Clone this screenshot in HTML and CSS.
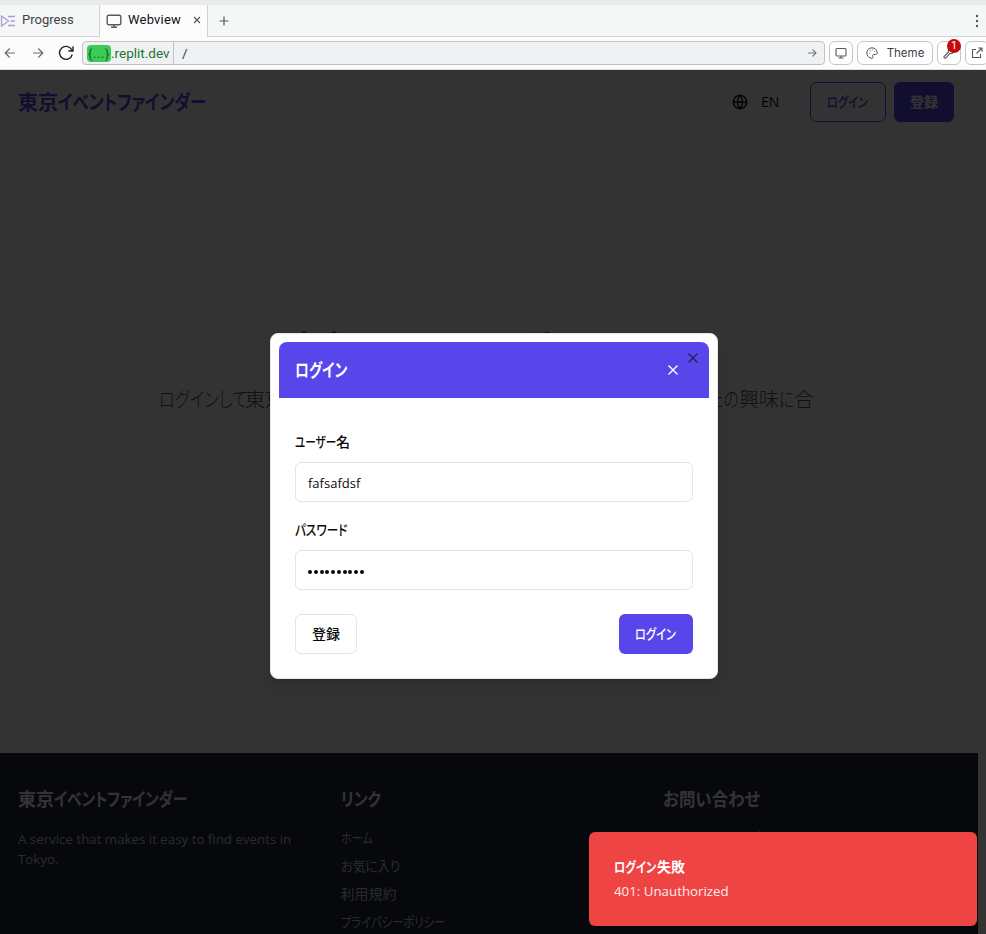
FILE: index.html
```
<!DOCTYPE html>
<html lang="ja">
<head>
<meta charset="utf-8">
<title>東京イベントファインダー</title>
<link rel="stylesheet" href="styles.css">
</head>
<body>
<div class="tabs">
  <div class="tab tab-progress">
    <svg class="ic-progress" width="15" height="12" viewBox="0 0 15 12" fill="none" stroke="#a9a0d6" stroke-width="1.300"><path d="M1.500 1v10l7-5zM8 1.500h7M10.500 6H15M8 10.500h7"/></svg>
    <span class="progress-label">Progress</span>
  </div>
  <div class="tab tab-active">
    <svg width="16" height="16" viewBox="0 0 16 16" fill="none" stroke="#555b63" stroke-width="1.400"><rect x="1.200" y="2.200" width="13.600" height="9.600" rx="1.500"/><path d="M8 12v2.500M5 14.300h6"/></svg>
    <span class="webview-label">Webview</span>
    <svg class="tab-close" width="8" height="8" viewBox="0 0 8 8" stroke="#555" stroke-width="1.100"><path d="M1 1l6 6M7 1L1 7"/></svg>
  </div>
  <svg class="tab-add" width="10" height="10" viewBox="0 0 10 10" stroke="#555" stroke-width="1.200"><path d="M5 .500v9M.500 5h9"/></svg>
  <svg class="tab-menu" width="4" height="14" viewBox="0 0 4 14" fill="#50555c"><circle cx="2" cy="2" r="1.200"/><circle cx="2" cy="7" r="1.200"/><circle cx="2" cy="12" r="1.200"/></svg>
</div>
<div class="toolbar">
  <svg class="nav back" width="12" height="12" viewBox="0 0 12 12" fill="none" stroke="#666c73" stroke-width="1.200"><path d="M11 6H1.200M5.700 1.500L1.200 6l4.500 4.500"/></svg>
  <svg class="nav fwd" width="12" height="12" viewBox="0 0 12 12" fill="none" stroke="#666c73" stroke-width="1.200"><path d="M1 6h9.800M6.300 1.500L10.800 6l-4.500 4.500"/></svg>
  <svg class="nav reload" width="16" height="16" viewBox="0 0 16 16" fill="none" stroke="#22262b" stroke-width="1.400"><path d="M14.300 9.500A6.500 6.500 0 1 1 13.700 4.700L14.800 6M15 1.300V6h-4.700"/></svg>
  <div class="address">
    <div class="host"><span class="dots">{...}</span><span>.replit.dev</span></div>
    <span class="path">/</span>
    <svg class="go" width="10" height="10" viewBox="0 0 10 10" fill="none" stroke="#777c82" stroke-width="1.100"><path d="M1 5h8M5.500 1.500L9 5 5.500 8.500"/></svg>
  </div>
  <div class="tool device"><svg width="12" height="12" viewBox="0 0 12 12" fill="none" stroke="#555b63" stroke-width="1.100"><rect x="1" y="1.500" width="10" height="7.500" rx="1"/><path d="M6 9v1.800M3.500 11h5"/></svg></div>
  <div class="tool theme">
    <svg width="12" height="12" viewBox="0 0 12 12" fill="none" stroke="#555b63" stroke-width="1"><path d="M6 .8C3 .8.8 3.100.8 6S3 11.200 6 11.200c1.200 0 1-.9.700-1.600-.5-1.300.1-2.100 1.300-2.100h1.600c1.100 0 1.600-.7 1.600-1.500C11.200 3 9 .8 6 .8z"/><path d="M3 6.100h.8M3.800 3.700h.8M6.300 2.800h.8M8.400 4.400h.8"/></svg>
    <span>Theme</span>
  </div>
  <div class="tool wrench"><svg width="12" height="12" viewBox="0 0 12 12" fill="none" stroke="#555b63" stroke-width="1.100"><path d="M8.200 1a3 3 0 0 0-2.700 4L1.200 9.300a1 1 0 0 0 1.500 1.500L7 6.500a3 3 0 0 0 4-2.700L9.500 5 7.800 4.200 7 2.500z"/></svg><span class="badge">1</span></div>
  <div class="tool popout"><svg width="12" height="12" viewBox="0 0 12 12" fill="none" stroke="#555b63" stroke-width="1.100"><path d="M5 2.500H1.500v8h8V7M7.300 1H11v3.700M11 1L5.500 6.500"/></svg></div>
</div>
<main class="viewport">
  <div class="page">
    <header class="site-header">
      <span class="brand">東京<span class="k k-brand">イベントファインダー</span></span>
      <svg class="globe" width="16" height="16" viewBox="0 0 24 24" fill="none" stroke="#0a0a0a" stroke-width="2"><circle cx="12" cy="12" r="10"/><path d="M2 12h20M12 2a15 15 0 0 1 0 20 15 15 0 0 1 0-20"/></svg>
      <span class="lang">EN</span>
      <span class="hbtn hbtn-outline"><span class="k k-login">ログイン</span></span>
      <span class="hbtn hbtn-solid">登録</span>
    </header>
    <section class="hero">
      <h1>東京<span class="k k-hero">イベントファインダーへようこそ</span></h1>
      <p><span><span class="k k-lead">ログインして</span>東京のイベントを探索し、</span><span><span class="k k-your">あなたの</span>興味<span class="k k-ni">に</span>合</span></p>
    </section>
    <footer class="site-footer">
      <div class="fcol">
        <h3>東京<span class="k k-fbrand">イベントファインダー</span></h3>
        <p>A service that makes it easy to find events in<br>Tokyo.</p>
      </div>
      <div class="fcol">
        <h3><span class="k k-link">リンク</span></h3>
        <ul><li><span class="k k-home">ホーム</span></li><li><span class="k k-fav">お気に入り</span></li><li>利用規約</li><li><span class="k k-privacy">プライバシーポリシー</span></li></ul>
      </div>
      <div class="fcol">
        <h3><span class="k k-contact">お問い合わせ</span></h3>
        <ul><li class="contact-line"><span class="k k-mail">メールでのお問い合わせ</span></li></ul>
      </div>
    </footer>
  </div>
  <div class="overlay"></div>
  <div class="dialog">
    <div class="dialog-head">
      <h2><span class="k k-title">ログイン</span></h2>
      <svg width="10" height="10" viewBox="0 0 10 10" stroke="#fff" stroke-width="1.400"><path d="M.500.500l9 9M9.500.500l-9 9"/></svg>
    </div>
    <svg class="dialog-x" width="10" height="10" viewBox="0 0 10 10" stroke="#251f5c" stroke-width="1.400"><path d="M.500.500l9 9M9.500.500l-9 9"/></svg>
    <div class="dialog-body">
      <div class="label"><span class="k k-user">ユーザー</span>名</div>
      <div class="field">fafsafdsf</div>
      <div class="label"><span class="k k-pass">パスワード</span></div>
      <div class="field password"><i></i><i></i><i></i><i></i><i></i><i></i><i></i><i></i><i></i><i></i></div>
      <div class="actions"><span class="btn register">登録</span><span class="btn login"><span class="k k-login">ログイン</span></span></div>
    </div>
  </div>
  <div class="toast"><strong><span class="k k-login">ログイン</span>失敗</strong><span class="toast-text">401: Unauthorized</span></div>
</main>
</body>
</html>
```
FILE: styles.css
```
* { box-sizing: border-box; margin: 0; padding: 0; }
body {
  width: 986px; height: 934px; overflow: hidden;
  display: flex; flex-direction: column;
  font-family: "Open Sans", "Noto Sans CJK JP", sans-serif;
  font-size: 14px; color: #0a0a0a; white-space: nowrap;
}
svg { display: block; flex: none; }
.tabs {
  height: 37px; flex: none; display: flex; align-items: center;
  border-top: 5px solid #e9ebed; border-bottom: 1px solid #cfd2d4;
  background: #f5f7f6; font-family: Roboto, sans-serif; font-size: 13px;
}
.tab { display: flex; align-items: center; height: 31px; }
.tab-progress { width: 99px; color: #3c4148; }
.ic-progress { margin-top: 1px; }
.progress-label { margin: -2px 0 0 7px; }
.tab-active {
  width: 109px; height: 32px; margin-bottom: -1px; padding: 0 6px 1px;
  background: #fcfcfc; border: solid #cfd2d4; border-width: 0 1px;
}
.webview-label { margin: -2px 0 0 6px; color: #0f1216; letter-spacing: .2px; }
.tab-close { margin: -1px 0 0 auto; }
.tab-add { margin-left: 11px; }
.tab-menu { margin-left: auto; margin-right: 7px; }
.toolbar {
  height: 33px; flex: none; display: flex; align-items: center;
  background: #fcfcfc; border-bottom: 1px solid #dcdedf;
  font-family: Roboto, sans-serif;
}
.nav.back { margin-left: 4px; }
.nav.fwd { margin-left: 16px; }
.nav.reload { margin-left: 14px; }
.address {
  width: 743px; flex: none; height: 24px; margin-left: 8px; display: flex; align-items: center;
  background: #eff1f3; border: 1px solid #bfc3c7; border-radius: 4px; font-size: 13.5px;
}
.host {
  width: 91px; height: 22px; padding-left: 4px; display: flex; align-items: center;
  border-right: 1px solid #bfc3c7; color: #1c7431;
}
.dots { width: 24px; height: 17px; line-height: 16px; text-align: center; background: #3ccc56; color: #0f6a28; border-radius: 4px; letter-spacing: .5px; }
.path { margin-left: 8px; color: #30353b; }
.go { margin-left: auto; margin-right: 7px; }
.tool {
  height: 24px; width: 24px; margin-left: 4px; flex: none; position: relative;
  display: flex; align-items: center; justify-content: center;
  background: #fff; border: 1px solid #c4c7ca; border-radius: 6px;
}
.theme { width: 76px; gap: 9px; font-family: "Inter", sans-serif; font-size: 11.5px; color: #3c4148; }
.badge {
  position: absolute; left: 9px; top: -3px; width: 14px; height: 14px; border-radius: 7px;
  background: #c40a0a; color: #fff; font-size: 11px; line-height: 14px; text-align: center;
}
.viewport { flex: 1; position: relative; overflow: hidden; background: #fff; font-feature-settings: "palt"; }
.page { width: 978px; height: 864px; display: flex; flex-direction: column; }

/* Condensed kana: each box holds the width its text has once scaled. */
.k { display: inline-block; transform-origin: left center; text-align: left; }
.k-brand { width: 148px; transform: scaleX(.815); }
.k-login { width: 43px; transform: scaleX(.8); }
.k-hero { width: 340px; transform: scaleX(.825); }
.k-lead { width: 86px; transform: scaleX(.82); }
.k-your { width: 62px; transform: scaleX(.8); }
.k-ni { width: 15px; transform: scaleX(.8); }
.k-fbrand { width: 133px; transform: scaleX(.815); }
.k-link { width: 41px; transform: scaleX(.83); }
.k-home { width: 31px; transform: scaleX(.79); }
.k-fav { width: 59px; transform: scaleX(.89); }
.k-privacy { width: 103px; transform: scaleX(.81); }
.k-contact { width: 97px; transform: scaleX(.915); }
.k-mail { width: 125px; transform: scaleX(.85); }
.k-title { width: 53px; transform: scaleX(.77); }
.k-user { width: 41px; transform: scaleX(.76); }
.k-pass { width: 53px; transform: scaleX(.83); }

.site-header {
  height: 65px; flex: none; display: flex; align-items: center; padding: 0 24px 0 18px;
  border-bottom: 1px solid #f0f0f0;
}
.brand { font-size: 20px; font-weight: 700; color: #5846eb; margin: -2px auto 0 0; }
.globe { margin-right: 13px; }
.lang { font-weight: 500; font-size: 14px; width: 49px; margin-top: -1px; }
.hbtn { height: 40px; padding-bottom: 2px; border-radius: 6px; display: flex; align-items: center; justify-content: center; font-weight: 500; }
.hbtn-outline { width: 76px; border: 1px solid #5846eb; color: #5846eb; }
.hbtn-solid { width: 60px; margin-left: 8px; background: #5846eb; color: #fff; font-weight: 700; }
.hero { height: 618px; flex: none; padding-top: 187px; text-align: center; }
.hero h1 { font-size: 30px; line-height: 48px; color: #5846eb; }
.hero p {
  width: 655px; margin: 16px 0 0 159px; display: flex; justify-content: space-between;
  font-size: 20px; line-height: 28px; font-weight: 300; color: #4b5563;
}
.site-footer {
  flex: 1; display: grid; grid-template-columns: 291px 291px 291px; column-gap: 31.5px;
  padding: 32px 18px; background: #1f2937; color: #d1d5db;
}
.site-footer h3 { font-size: 18px; line-height: 28px; font-weight: 700; color: #fff; margin-bottom: 16px; }
.site-footer p { line-height: 20px; font-size: 13.3px; }
.site-footer ul { list-style: none; margin-top: -1px; }
.site-footer li { line-height: 20px; margin-bottom: 8px; }
.overlay { position: absolute; inset: 0; background: rgba(0, 0, 0, .8); }
.dialog {
  position: absolute; left: 270px; top: 263px; width: 448px; height: 346px; padding: 8px;
  background: #fff; border: 1px solid #e5e5e5; border-radius: 8px;
  box-shadow: 0 10px 15px -3px rgba(0, 0, 0, .1), 0 4px 6px -4px rgba(0, 0, 0, .1);
}
.dialog-head {
  height: 56px; padding: 0 31px 0 16px; display: flex; align-items: center; justify-content: space-between;
  background: #5846eb; color: #fff; border-radius: 8px 8px 0 0;
}
.dialog-head h2 { font-size: 18px; line-height: 28px; font-weight: 700; }
.dialog-x { position: absolute; right: 19px; top: 19px; }
.dialog-body { padding: 34px 16px 0; }
.label { height: 20px; line-height: 20px; margin-bottom: 10px; font-weight: 500; }
.field {
  height: 40px; margin-bottom: 18px; padding: 2px 12px 0; display: flex; align-items: center;
  border: 1px solid #e5e5e5; border-radius: 6px; font-size: 13px;
}
.password { gap: 1.75px; padding-top: 4px; margin-bottom: 24px; }
.password i { width: 4px; height: 4px; border-radius: 2px; background: #0a0a0a; }
.actions { display: flex; justify-content: space-between; }
.btn { height: 40px; padding-bottom: 2px; border-radius: 6px; display: flex; align-items: center; justify-content: center; font-weight: 500; }
.register { width: 62px; border: 1px solid #e5e5e5; }
.login { width: 74px; background: #5846eb; color: #fff; }
.toast {
  position: absolute; left: 589px; top: 762px; width: 388px; height: 94px; padding: 25px;
  display: flex; flex-direction: column; gap: 4px;
  background: #ef4444; border-radius: 6px; color: #fff;
}
.toast strong { line-height: 20px; font-weight: 700; }
.toast-text { line-height: 20px; font-size: 13.3px; opacity: .9; }
```
